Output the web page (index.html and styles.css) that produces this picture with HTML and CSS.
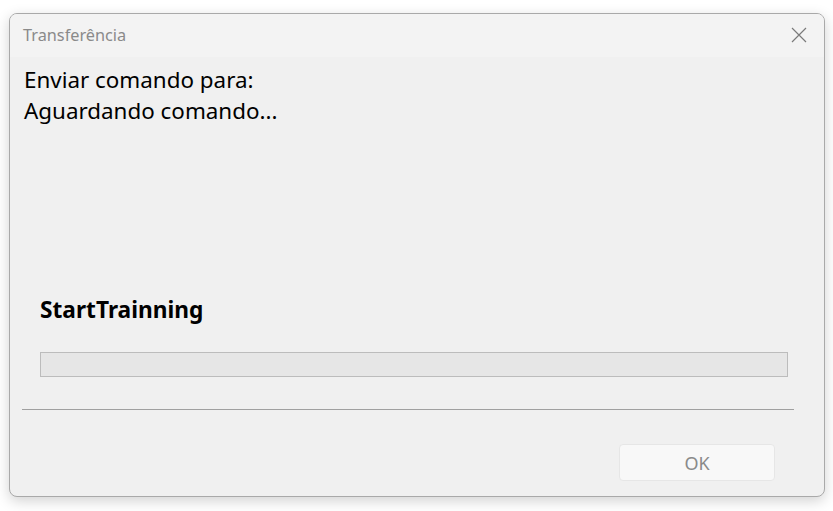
FILE: index.html
```html
<!DOCTYPE html>
<html lang="pt">
<head>
<meta charset="utf-8">
<link rel="stylesheet" href="styles.css">
</head>
<body>
<div class="window">
  <div class="titlebar">
    <span class="title">Transferência</span>
    <svg class="close" width="16" height="16" viewBox="0 0 16 16"><path d="M1 1 L15 15 M15 1 L1 15" stroke="#7a7a7a" stroke-width="1.2" fill="none"/></svg>
  </div>
  <div class="content">
    <div class="msg">
      <div>Enviar comando para:</div>
      <div>Aguardando comando...</div>
    </div>
    <div class="task">StartTrainning</div>
    <div class="progress"></div>
    <div class="sep"></div>
    <div class="actions">
      <button class="ok">OK</button>
    </div>
  </div>
</div>
</body>
</html>
```
FILE: styles.css
```css
html, body { margin: 0; padding: 0; }
body {
  background: #ffffff;
  width: 833px;
  height: 511px;
  overflow: hidden;
  font-family: "Noto Sans", "Open Sans", sans-serif;
}
.window {
  margin: 13px 0 0 9px;
  width: 814px;
  height: 482px;
  border: 1px solid #a9a9a9;
  border-radius: 8px;
  background: #f0f0f0;
  box-shadow: 0 4px 14px rgba(0,0,0,0.18);
  overflow: hidden;
  display: flex;
  flex-direction: column;
}
.titlebar {
  height: 43px;
  background: #f3f3f3;
  display: flex;
  align-items: center;
  justify-content: space-between;
  padding: 0 17px 0 13px;
  flex: none;
}
.title {
  font-size: 16.3px;
  color: #8a8a8a;
  margin-top: -1px;
}
.close { display: block; margin-top: -1px; }
.content {
  flex: 1;
  display: flex;
  flex-direction: column;
  padding: 0 30px 0 12px;
}
.msg {
  padding: 7px 0 0 2px;
  font-size: 22.4px;
  line-height: 31px;
  color: #000;
}
.task {
  margin-top: 169px;
  padding-left: 18px;
  font-size: 22.7px;
  font-weight: bold;
  line-height: 30px;
  color: #000;
}
.progress {
  margin: 27px 6px 0 18px;
  height: 23px;
  background: #e6e6e6;
  border: 1px solid #bcbcbc;
}
.sep {
  margin-top: 32px;
  height: 1px;
  background: #a0a0a0;
}
.actions {
  display: flex;
  justify-content: flex-end;
  padding-top: 34px;
  padding-right: 19px;
}
.ok {
  width: 156px;
  height: 37px;
  background: #f8f8f8;
  border: 1px solid #e6e6e6;
  border-radius: 4px;
  font-family: "Noto Sans", "Open Sans", sans-serif;
  font-size: 18px;
  color: #8a8a8a;
  padding: 0;
}
```
